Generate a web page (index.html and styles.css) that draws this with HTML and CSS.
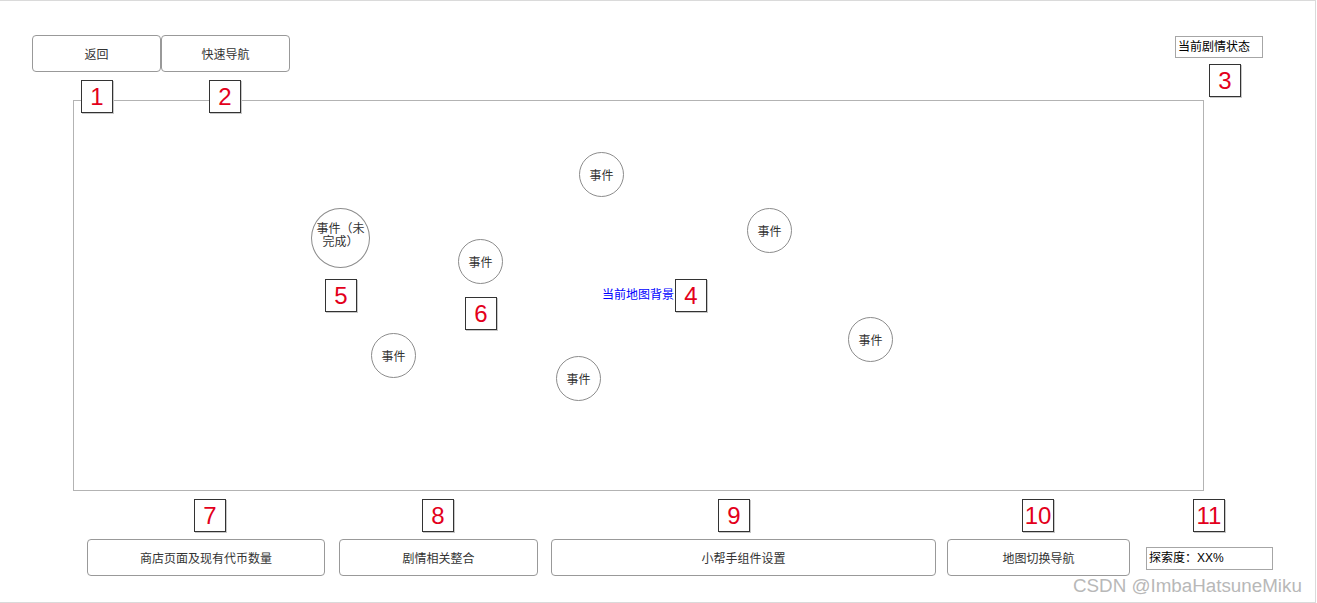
FILE: index.html
```html
<!DOCTYPE html>
<html lang="zh">
<head>
<meta charset="utf-8">
<title>地图页面原型</title>
<link rel="stylesheet" href="styles.css">
</head>
<body>
<div class="page">
  <div class="top">
    <div class="btn btn-top">返回</div>
    <div class="btn btn-top">快速导航</div>
    <div class="status">当前剧情状态</div>
  </div>

  <div class="map">
    <div class="node n-a">事件</div>
    <div class="node node-big n-b"><span class="wrap">事件（未完成）</span></div>
    <div class="node n-c">事件</div>
    <div class="node n-d">事件</div>
    <div class="node n-e">事件</div>
    <div class="node n-f">事件</div>
    <div class="node n-g">事件</div>
    <div class="map-label">当前地图背景</div>
  </div>

  <div class="bottom">
    <div class="btn b-shop">商店页面及现有代币数量</div>
    <div class="btn b-story">剧情相关整合</div>
    <div class="btn b-helper">小帮手组件设置</div>
    <div class="btn b-mapnav">地图切换导航</div>
    <div class="explore">探索度：XX%</div>
  </div>

  <div class="badge k1">1</div>
  <div class="badge k2">2</div>
  <div class="badge k3">3</div>
  <div class="badge k4">4</div>
  <div class="badge k5">5</div>
  <div class="badge k6">6</div>
  <div class="badge k7">7</div>
  <div class="badge k8">8</div>
  <div class="badge k9">9</div>
  <div class="badge k10">10</div>
  <div class="badge k11">11</div>

  <div class="watermark">CSDN @ImbaHatsuneMiku</div>
</div>
</body>
</html>
```

FILE: styles.css
```css
html, body {
  margin: 0;
  padding: 0;
  background: #ffffff;
}

body {
  font-family: "Liberation Sans", "Noto Sans CJK SC", sans-serif;
  font-size: 12px;
  color: #333333;
}

.page {
  position: relative;
  box-sizing: border-box;
  width: 1316px;
  height: 603px;
  border-top: 1px solid #dadada;
  border-right: 1px solid #dadada;
  border-bottom: 1px solid #dadada;
  overflow: hidden;
}

.top {
  display: flex;
  align-items: flex-start;
  padding: 34px 52px 0 32px;
}

.btn {
  box-sizing: border-box;
  height: 37px;
  border: 1px solid #999999;
  border-radius: 4px;
  display: flex;
  align-items: center;
  justify-content: center;
  font-size: 12px;
  color: #333333;
  background: #ffffff;
}

.btn-top {
  width: 129px;
}

.status {
  margin-left: auto;
  margin-top: 1px;
  box-sizing: border-box;
  width: 88px;
  height: 22px;
  border: 1px solid #a6a6a6;
  padding: 0 0 0 2px;
  line-height: 20px;
  font-size: 12px;
  color: #000000;
}

.map {
  position: relative;
  box-sizing: border-box;
  margin: 28px 0 0 73px;
  width: 1131px;
  height: 391px;
  border: 1px solid #b3b3b3;
}

.node {
  position: absolute;
  box-sizing: border-box;
  width: 45px;
  height: 45px;
  border: 1px solid #8c8c8c;
  border-radius: 50%;
  display: flex;
  align-items: center;
  justify-content: center;
  text-align: center;
  font-size: 12px;
  color: #333333;
  background: #ffffff;
}

.node-big {
  width: 59px;
  height: 60px;
}

.wrap {
  display: block;
  width: 50px;
  line-height: 13px;
  margin-top: -4px;
}

.n-a { left: 505px; top: 51px; }
.n-b { left: 237px; top: 107px; }
.n-c { left: 384px; top: 138px; }
.n-d { left: 673px; top: 107px; }
.n-e { left: 774px; top: 216px; }
.n-f { left: 297px; top: 232px; }
.n-g { left: 482px; top: 255px; }

.map-label {
  position: absolute;
  left: 528px;
  top: 187px;
  font-size: 12px;
  line-height: 14px;
  color: #0000ff;
  white-space: nowrap;
}

.bottom {
  display: flex;
  align-items: flex-start;
  margin-top: 48px;
  padding-left: 87px;
}

.b-shop { width: 238px; }
.b-story { width: 199px; margin-left: 14px; }
.b-helper { width: 385px; margin-left: 13px; }
.b-mapnav { width: 183px; margin-left: 11px; }

.explore {
  box-sizing: border-box;
  width: 127px;
  height: 23px;
  margin-left: 16px;
  margin-top: 8px;
  border: 1px solid #a6a6a6;
  padding-left: 2px;
  line-height: 21px;
  font-size: 12px;
  color: #000000;
}

.badge {
  position: absolute;
  box-sizing: border-box;
  width: 32px;
  height: 33px;
  border: 1px solid #333333;
  box-shadow: 1px 1px 0 #c8c8c8;
  background: #ffffff;
  display: flex;
  align-items: center;
  justify-content: center;
  font-family: "Liberation Sans", Arial, sans-serif;
  font-size: 24px;
  color: #e3001b;
}

.k1 { left: 81px; top: 79px; }
.k2 { left: 209px; top: 79px; }
.k3 { left: 1209px; top: 63px; }
.k4 { left: 675px; top: 278px; }
.k5 { left: 325px; top: 278px; }
.k6 { left: 465px; top: 296px; }
.k7 { left: 194px; top: 498px; }
.k8 { left: 422px; top: 498px; }
.k9 { left: 718px; top: 498px; }
.k10 { left: 1022px; top: 498px; }
.k11 { left: 1193px; top: 498px; }

.watermark {
  position: absolute;
  left: 1073px;
  top: 574px;
  font-family: "Liberation Sans", Arial, sans-serif;
  font-size: 18.8px;
  line-height: 22px;
  color: #b8b8b8;
  white-space: nowrap;
}
```
